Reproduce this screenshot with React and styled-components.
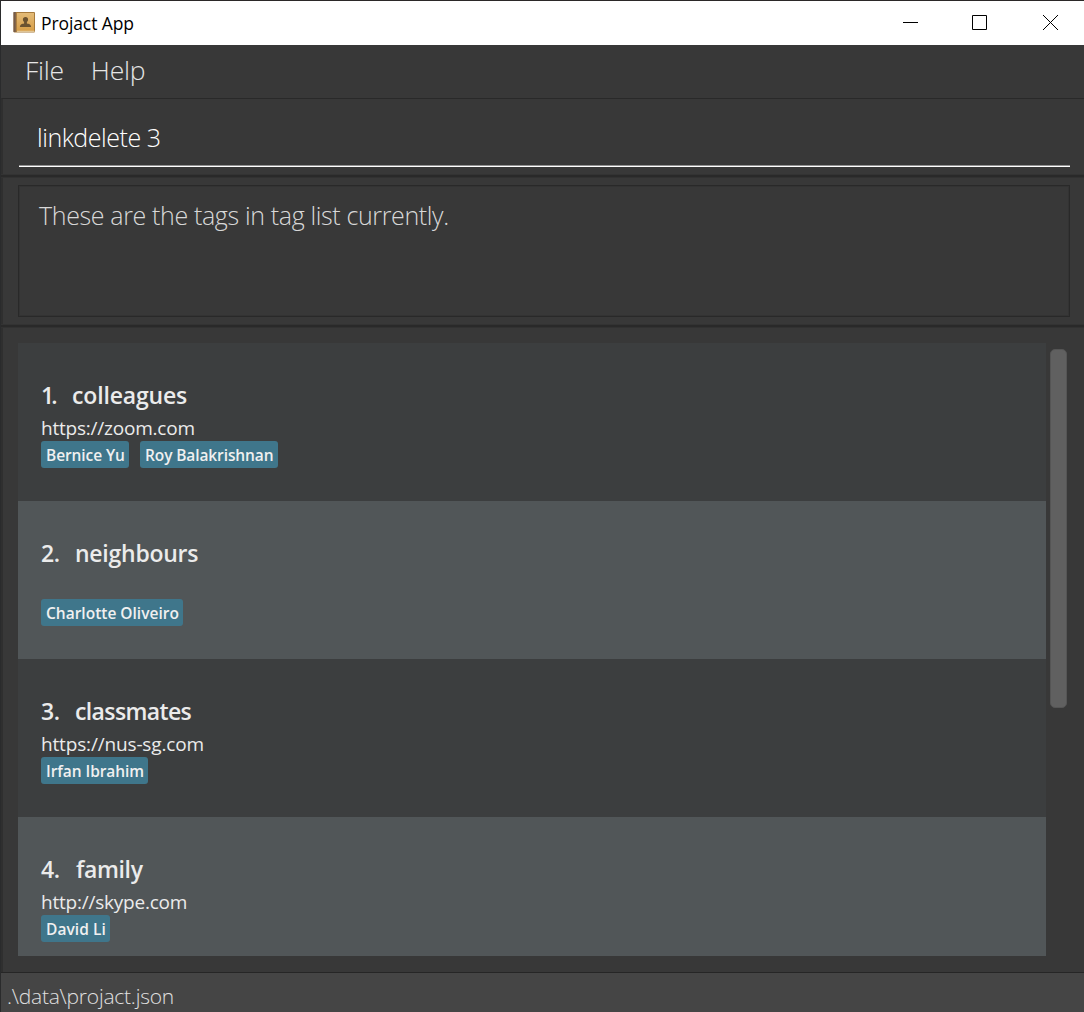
import React from "react";
import styled, { createGlobalStyle } from "styled-components";

const Global = createGlobalStyle`
  * { box-sizing: border-box; }
  body {
    margin: 0;
    background: #383838;
    font-family: "Open Sans", "Noto Sans", sans-serif;
  }
`;

const Window = styled.div`
  display: flex;
  flex-direction: column;
  width: 1084px;
  height: 1012px;
  overflow: hidden;
  background: #383838;
  border-top: 1px solid #2b2828;
  border-left: 1px solid #2a2b2c;
`;

const TitleBar = styled.header`
  display: flex;
  align-items: center;
  height: 44px;
  flex: none;
  padding-left: 12px;
  background: #fff;
`;

const Title = styled.span`
  flex: 1;
  margin-left: 5px;
  line-height: 44px;
  font-size: 17.5px;
  letter-spacing: -0.1px;
  color: #000;
`;

const WindowButton = styled.button`
  display: flex;
  align-items: center;
  justify-content: center;
  width: ${(p) => p.$width}px;
  height: 44px;
  padding: 0;
  border: 0;
  background: none;
`;

const MenuBar = styled.nav`
  display: flex;
  gap: 27px;
  height: 53px;
  flex: none;
  padding-left: 24px;
`;

const MenuItem = styled.span`
  line-height: 51px;
  font-size: 26.5px;
  font-weight: 300;
  letter-spacing: -0.25px;
  color: #e6e6e6;
`;

const Pane = styled.section`
  flex: none;
  height: ${(p) => p.$height}px;
  padding: ${(p) => p.$padding};
  border-left: 2px solid #2f2f2f;
  border-top: ${(p) => (p.$first ? "1px solid #292929" : "0")};
`;

const Divider = styled.div`
  flex: none;
  height: 4px;
  background: linear-gradient(#333 25%, #292929 25%, #292929 75%, #313131 75%);
`;

const CommandField = styled.div`
  height: 48px;
  padding-left: 18px;
  border-bottom: 1px solid #fff;
  box-shadow: inset 0 -1px #919191;
  line-height: 37px;
  font-size: 25px;
  font-weight: 300;
  letter-spacing: -0.45px;
  color: #fff;
`;

const ResultBox = styled.div`
  height: 132px;
  padding: 11px 0 0 20px;
  border: 1px solid #292929;
  box-shadow: inset 0 0 0 1px #333;
  line-height: 36px;
  font-size: 25px;
  font-weight: 300;
  letter-spacing: -0.36px;
  color: #d8d8d8;
`;

const ListArea = styled.div`
  display: flex;
  gap: 4px;
  height: 613px;
`;

const List = styled.ul`
  width: 1028px;
  margin: 0;
  padding: 0;
  list-style: none;
  overflow: hidden;
`;

const Card = styled.li`
  height: 158px;
  padding: 34px 23px 0;
  background: #3c3e3f;
  color: #ebebeb;

  &:nth-child(even) {
    background: #515658;
  }
`;

const Heading = styled.div`
  display: flex;
  height: 36px;
  line-height: 36px;
  font-size: 23px;
  font-weight: 600;
`;

const Index = styled.span`
  width: ${(p) => p.$width}px;
  letter-spacing: ${(p) => p.$tracking}px;
`;

const Name = styled.span`
  letter-spacing: ${(p) => p.$tracking}px;
`;

const Link = styled.div`
  height: 28px;
  line-height: 30px;
  font-size: 19px;
  letter-spacing: ${(p) => p.$tracking}px;
`;

const Tags = styled.div`
  display: flex;
  gap: 11px;
`;

const Tag = styled.span`
  width: ${(p) => p.$width}px;
  height: 27px;
  padding-left: 5px;
  border-radius: 3px;
  background: #3f768b;
  line-height: 28px;
  font-size: 15.5px;
  font-weight: 600;
  letter-spacing: ${(p) => p.$tracking}px;
  white-space: nowrap;
  color: #f0f0f0;
`;

const ScrollThumb = styled.div`
  width: 17px;
  height: 359px;
  margin-top: 6px;
  border: 1px solid #555;
  border-radius: 5px;
  background: #606060;
`;

const StatusBar = styled.footer`
  flex: 1;
  padding: 6px 0 0 6px;
  border-top: 1px solid #262626;
  background: #454545;
  line-height: 34px;
  font-size: 21px;
  font-weight: 300;
  letter-spacing: -0.22px;
  color: #e0e0e0;
`;

const groups = [
  { index: 1, indexWidth: 31, indexTracking: -3, name: "colleagues", tracking: -0.16, link: "https://zoom.com", linkTracking: -0.22,
    tags: [["Bernice Yu", 88, -0.08], ["Roy Balakrishnan", 138, -0.11]] },
  { index: 2, indexWidth: 34, indexTracking: -0.4, name: "neighbours", tracking: -0.25, link: "",
    tags: [["Charlotte Oliveiro", 142, 0]] },
  { index: 3, indexWidth: 34, indexTracking: -0.4, name: "classmates", tracking: -0.62, link: "https://nus-sg.com", linkTracking: -0.16,
    tags: [["Irfan Ibrahim", 107, -0.07]] },
  { index: 4, indexWidth: 35, indexTracking: -0.4, name: "family", tracking: -0.35, link: "http://skype.com", linkTracking: -0.22,
    tags: [["David Li", 69, 0.05]] },
];

function BookIcon() {
  return (
    <svg width="23" height="22" viewBox="0 0.5 23 22">
      <defs>
        <linearGradient id="cover" x1="0" y1="0" x2="0" y2="1">
          <stop offset="0" stopColor="#e3bb78" />
          <stop offset="1" stopColor="#d79e48" />
        </linearGradient>
      </defs>
      <rect x="0.5" y="0.5" width="21.5" height="20.5" rx="1" fill="#a67a3c" />
      <rect x="4" y="1.5" width="17" height="18" fill="url(#cover)" />
      <rect x="0.5" y="0.5" width="2.5" height="20" fill="#745b4a" />
      <rect x="2.7" y="1" width="1.2" height="19.5" fill="#ad8042" />
      <rect x="4" y="19.3" width="17.5" height="1" fill="#efd9ad" />
      <path
        d="M12.5 5.5c1.7 0 2.600 1 2.600 2.500 0 1.200-.6 2-1.200 2.600v1.300c1.900.4 4 .7 4.200 3.600H6.900c.2-2.900 2.300-3.200 4.200-3.600v-1.300c-.6-.6-1.200-1.400-1.200-2.600 0-1.500.9-2.500 2.600-2.500z"
        fill="#6b5230"
      />
    </svg>
  );
}

function Glyph({ d }) {
  return (
    <svg width="16" height="16" viewBox="0 1 16 16" overflow="visible" fill="none" stroke="#000">
      <path d={d} />
    </svg>
  );
}

export default function App() {
  return (
    <>
      <Global />
      <Window>
        <TitleBar>
          <BookIcon />
          <Title>Projact App</Title>
          <WindowButton $width={64} aria-label="Minimize">
            <Glyph d="M1 8.5H16" />
          </WindowButton>
          <WindowButton $width={74} aria-label="Maximize">
            <Glyph d="M1.5 1.5H15.5V15.5H1.5Z" />
          </WindowButton>
          <WindowButton $width={68} aria-label="Close">
            <Glyph d="M1 1L16 16M16 1L1 16" />
          </WindowButton>
        </TitleBar>
        <MenuBar>
          <MenuItem>File</MenuItem>
          <MenuItem>Help</MenuItem>
        </MenuBar>
        <Pane $first $height={76} $padding="20px 14px 0 16px">
          <CommandField>linkdelete 3</CommandField>
        </Pane>
        <Divider />
        <Pane $height={146} $padding="7px 14px 0 15px">
          <ResultBox>These are the tags in tag list currently.</ResultBox>
        </Pane>
        <Divider />
        <Pane $height={644} $padding="15px 0 0 15px">
          <ListArea>
            <List>
              {groups.map((g) => (
                <Card key={g.index}>
                  <Heading>
                    <Index $width={g.indexWidth} $tracking={g.indexTracking}>{g.index}.</Index>
                    <Name $tracking={g.tracking}>{g.name}</Name>
                  </Heading>
                  <Link $tracking={g.linkTracking || 0}>{g.link}</Link>
                  <Tags>
                    {g.tags.map(([label, width, tracking]) => (
                      <Tag key={label} $width={width} $tracking={tracking}>{label}</Tag>
                    ))}
                  </Tags>
                </Card>
              ))}
            </List>
            <ScrollThumb />
          </ListArea>
        </Pane>
        <StatusBar>.\data\projact.json</StatusBar>
      </Window>
    </>
  );
}
